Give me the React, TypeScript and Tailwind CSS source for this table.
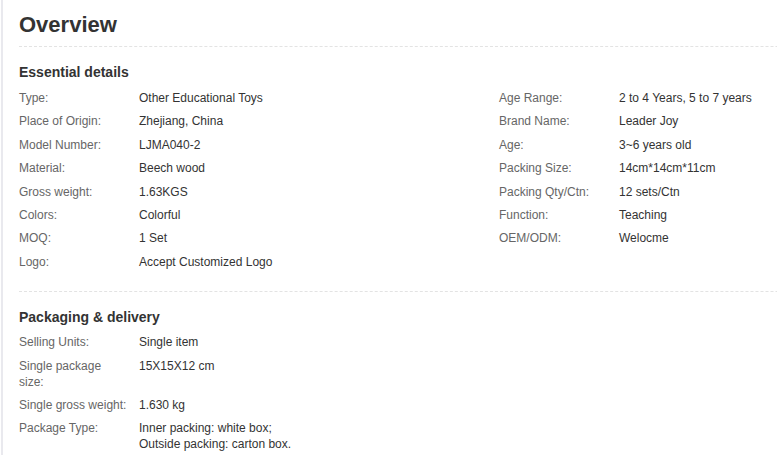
const essentialLeft = [
  ["Type:", "Other Educational Toys"],
  ["Place of Origin:", "Zhejiang, China"],
  ["Model Number:", "LJMA040-2"],
  ["Material:", "Beech wood"],
  ["Gross weight:", "1.63KGS"],
  ["Colors:", "Colorful"],
  ["MOQ:", "1 Set"],
  ["Logo:", "Accept Customized Logo"],
];

const essentialRight = [
  ["Age Range:", "2 to 4 Years, 5 to 7 years"],
  ["Brand Name:", "Leader Joy"],
  ["Age:", "3~6 years old"],
  ["Packing Size:", "14cm*14cm*11cm"],
  ["Packing Qty/Ctn:", "12 sets/Ctn"],
  ["Function:", "Teaching"],
  ["OEM/ODM:", "Welocme"],
];

const packaging = [
  ["Selling Units:", "Single item"],
  ["Single package size:", "15X15X12 cm"],
  ["Single gross weight:", "1.630 kg"],
  ["Package Type:", "Inner packing: white box;\nOutside packing: carton box."],
];

function Rows({ rows }: { rows: string[][] }) {
  return (
    <div className="flex w-[480px] shrink-0 flex-col">
      {rows.map(([label, value]) => (
        <div key={label} className="flex pb-[7.4px] text-[12px] leading-[16px]">
          <span className="mr-[12px] w-[108px] shrink-0 text-[#666]">{label}</span>
          <span className="whitespace-pre-line text-[#333]">{value}</span>
        </div>
      ))}
    </div>
  );
}

export default function App() {
  return (
    <div className="h-[455px] w-[777px] overflow-hidden bg-white font-['Liberation_Sans',Arial,sans-serif]">
      <div className="ml-[1px] h-full border-l-2 border-[#e9e9ee] pl-[16px]">
        <h1 className="pt-[11px] text-[22px] font-bold leading-[28px] text-[#333]">Overview</h1>
        <div className="mt-[7px] w-[1000px] border-t border-dashed border-[#e3e3e3]" />

        <section className="pt-[15px]">
          <h2 className="text-[14px] font-bold leading-[20px] text-[#333]">Essential details</h2>
          <div className="mt-[8px] flex">
            <Rows rows={essentialLeft} />
            <Rows rows={essentialRight} />
          </div>
        </section>

        <div className="mt-[14px] w-[1000px] border-t border-dashed border-[#e3e3e3]" />

        <section className="pt-[15px]">
          <h2 className="text-[14px] font-bold leading-[20px] text-[#333]">Packaging &amp; delivery</h2>
          <div className="mt-[7px] flex">
            <Rows rows={packaging} />
          </div>
        </section>
      </div>
    </div>
  );
}
